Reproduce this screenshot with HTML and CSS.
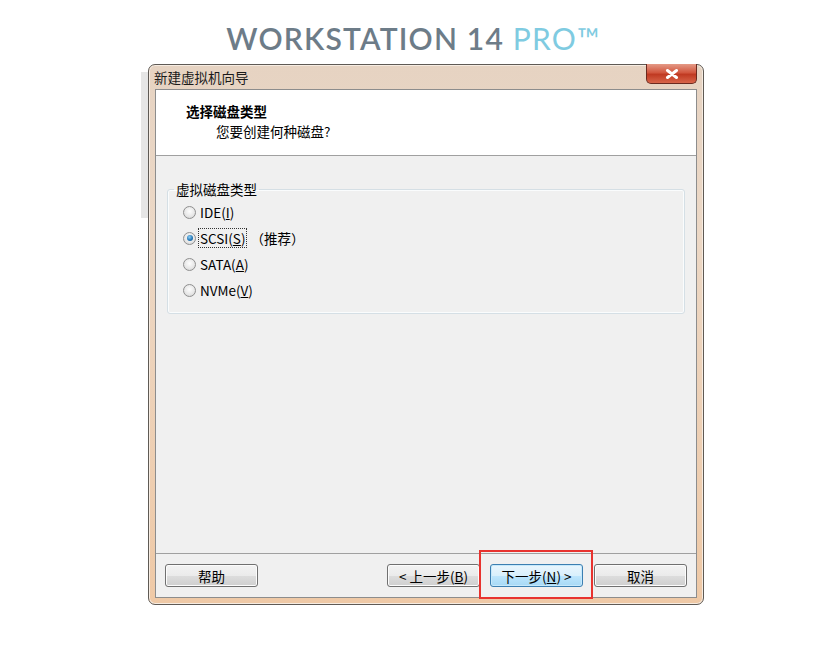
FILE: index.html
```html
<!DOCTYPE html>
<html lang="zh-CN">
<head>
    <meta charset="UTF-8">
    <title>新建虚拟机向导</title>
    <link rel="stylesheet" href="styles.css">
</head>
<body>
    <div class="brand">WORKSTATION 14 <span class="pro">PRO™</span></div>

    <div class="stage">
        <div class="window">
            <div class="titlebar">
                <span class="caption">新建虚拟机向导</span>
                <button class="close" aria-label="关闭">
                    <svg width="14" height="10" viewBox="0 0 14 10">
                        <path d="M2.5 1.5 L11.5 8.5 M11.5 1.5 L2.5 8.5" stroke="#fff" stroke-width="3" stroke-linecap="round"/>
                    </svg>
                </button>
            </div>

            <div class="client">
                <div class="header">
                    <div class="heading">选择磁盘类型</div>
                    <div class="subheading">您要创建何种磁盘?</div>
                </div>

                <div class="body">
                    <fieldset class="group">
                        <legend>虚拟磁盘类型</legend>
                        <label class="radio"><span class="dot"></span>IDE(<u>I</u>)</label>
                        <label class="radio checked"><span class="dot"></span><span class="focus">SCSI(<u>S</u>)</span><span class="hint">（推荐）</span></label>
                        <label class="radio"><span class="dot"></span>SATA(<u>A</u>)</label>
                        <label class="radio"><span class="dot"></span>NVMe(<u>V</u>)</label>
                    </fieldset>
                </div>

                <div class="footer">
                    <button class="btn">帮助</button>
                    <div class="spacer"></div>
                    <button class="btn">&lt; 上一步(<u>B</u>)</button>
                    <div class="next-wrap">
                        <button class="btn default">下一步(<u>N</u>) &gt;</button>
                        <span class="mark"></span>
                    </div>
                    <button class="btn">取消</button>
                </div>
            </div>
        </div>
    </div>
</body>
</html>
```

FILE: styles.css
```css
body {
    margin: 0;
    background: #fff;
    font-family: "Noto Sans CJK SC", "Noto Sans", sans-serif;
    font-size: 13.5px;
    color: #000;
}

.brand {
    height: 64px;
    box-sizing: border-box;
    padding: 18px 0 0 0;
    text-align: center;
    margin-left: -12px;
    font-family: Lato, "Open Sans", sans-serif;
    font-size: 30px;
    line-height: 40px;
    letter-spacing: 1.2px;
    color: #6d7c88;
    font-weight: 600;
}

.pro {
    color: #7fcbe1;
    font-weight: 400;
}

.stage {
    position: relative;
    padding-left: 148px;
}

.stage::before {
    content: "";
    position: absolute;
    left: 141px;
    top: 8px;
    width: 7px;
    height: 146px;
    background: #e6e6e6;
}

.window {
    position: relative;
    width: 556px;
    height: 541px;
    box-sizing: border-box;
    border: 1px solid #5f5a55;
    border-radius: 7px;
    background: linear-gradient(to bottom, #e6d3c2 0%, #ecd8c6 30%, #efc9a6 100%);
    padding: 0 6px 6px 6px;
    display: flex;
    flex-direction: column;
    box-shadow: inset 0 0 0 1px #f6ece2;
}

.titlebar {
    height: 24px;
    position: relative;
    display: flex;
    align-items: center;
}

.caption {
    margin-left: -1px;
    color: #1a1a1a;
}

.close {
    position: absolute;
    right: 0;
    top: -1px;
    width: 51px;
    height: 20px;
    border: 1px solid #6b2a1f;
    border-top: none;
    border-radius: 0 0 5px 5px;
    background: linear-gradient(to bottom, #e49a86 0%, #d2573f 45%, #c03a22 55%, #d8654a 100%);
    display: flex;
    align-items: center;
    justify-content: center;
    padding: 0;
}

.client {
    flex: 1;
    border: 1px solid #8d8d8d;
    background: #f0f0f0;
    display: flex;
    flex-direction: column;
}

.header {
    height: 66px;
    box-sizing: border-box;
    background: #fff;
    border-bottom: 1px solid #a0a0a0;
    padding: 12px 0 0 30px;
}

.heading {
    font-weight: bold;
    line-height: 19px;
}

.subheading {
    padding-left: 30px;
    line-height: 20px;
}

.body {
    flex: 1;
    padding: 25px 11px 0 11px;
}

.group {
    margin: 0;
    height: 133px;
    box-sizing: border-box;
    border: 1px solid #d5dfe5;
    border-radius: 3px;
    box-shadow: inset 0 0 0 1px #fafcfd;
    padding: 2px 0 0 15px;
}

.group legend {
    padding: 0 2px;
    margin-left: -9px;
    line-height: 16px;
}

.radio {
    display: flex;
    align-items: center;
    height: 26px;
}

.dot {
    width: 13px;
    height: 13px;
    border: 1px solid #8f8f8f;
    border-radius: 50%;
    background: radial-gradient(circle at 50% 40%, #fdfdfd 0%, #e8e8e8 55%, #cfcfcf 100%);
    margin-right: 4px;
    box-sizing: border-box;
    position: relative;
    flex: none;
}

.checked .dot::after {
    content: "";
    position: absolute;
    left: 2.5px;
    top: 2.5px;
    width: 6px;
    height: 6px;
    border-radius: 50%;
    background: radial-gradient(circle at 40% 35%, #8fd0f5 0%, #2679b8 55%, #0d4f86 100%);
}

.focus {
    outline: 1px dotted #333;
    padding: 0 1px;
    margin-left: -1px;
    line-height: 18px;
}

.hint {
    margin-left: 4px;
}

.footer {
    height: 44px;
    box-sizing: border-box;
    border-top: 1px solid #a0a0a0;
    display: flex;
    align-items: flex-start;
    padding: 10px 9px 0 9px;
}

.spacer {
    flex: 1;
}

.btn {
    width: 93px;
    height: 23px;
    border: 1px solid #707070;
    border-radius: 3px;
    background: linear-gradient(to bottom, #f3f3f3 0%, #ebebeb 50%, #dddddd 51%, #cfcfcf 100%);
    font-family: "Noto Sans CJK SC", "Noto Sans", sans-serif;
    font-size: 13.5px;
    color: #000;
    padding: 0;
    line-height: 20px;
    box-shadow: inset 0 0 0 1px #fcfcfc;
}

.next-wrap {
    position: relative;
    margin: 0 11px 0 10px;
}

.btn.default {
    border-color: #3c7fb1;
    background: linear-gradient(to bottom, #eaf6fd 0%, #d9f0fc 50%, #bee6fd 51%, #a7d9f5 100%);
    box-shadow: inset 0 0 0 1px #c6e9fc;
}

.mark {
    position: absolute;
    left: -11px;
    top: -14px;
    width: 110px;
    height: 45px;
    border: 2px solid #e8332f;
}
```
